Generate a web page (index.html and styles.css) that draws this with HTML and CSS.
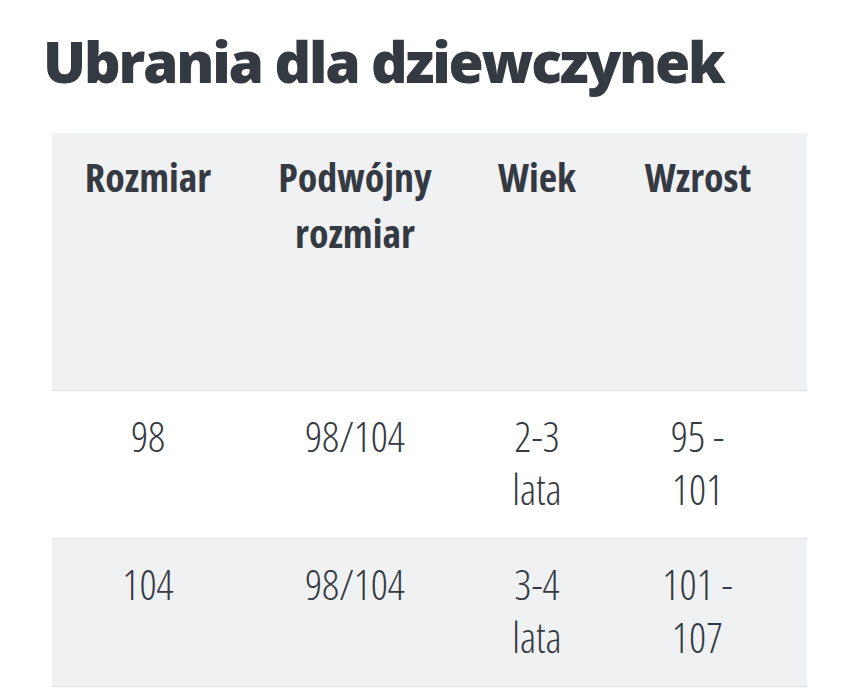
FILE: index.html
```html
<!DOCTYPE html>
<html lang="pl">
<head>
<meta charset="utf-8">
<title>Ubrania dla dziewczynek</title>
<link rel="stylesheet" href="styles.css">
</head>
<body>
<main class="page">
  <h1 class="title">Ubrania dla dziewczynek</h1>
  <table class="sizes">
    <colgroup>
      <col class="c1"><col class="c2"><col class="c3"><col class="c4">
    </colgroup>
    <thead>
      <tr>
        <th class="cell-1">Rozmiar</th>
        <th class="cell-2">Podwójny rozmiar</th>
        <th class="cell-3">Wiek</th>
        <th class="cell-4">Wzrost</th>
      </tr>
    </thead>
    <tbody>
      <tr>
        <td class="cell-1">98</td>
        <td class="cell-2">98/104</td>
        <td class="cell-3">2-3 lata</td>
        <td class="cell-4">95 - 101</td>
      </tr>
      <tr class="alt">
        <td class="cell-1">104</td>
        <td class="cell-2">98/104</td>
        <td class="cell-3">3-4 lata</td>
        <td class="cell-4">101 - 107</td>
      </tr>
    </tbody>
  </table>
</main>
</body>
</html>
```
FILE: styles.css
```css
html, body {
  margin: 0;
  padding: 0;
  background: #ffffff;
}
body {
  font-family: "Open Sans", "Liberation Sans", sans-serif;
  font-stretch: 75%;
  color: #353a42;
}
.page {
  padding: 26px 35px 0 43px;
}
.title {
  margin: 0 0 37px 0;
  font-size: 57px;
  line-height: 70px;
  font-weight: 800;
  font-stretch: 90%;
  letter-spacing: -2.2px;
  color: #353a42;
}
.sizes {
  margin-left: 9px;
  width: 755px;
  table-layout: fixed;
  border-collapse: collapse;
}
.c1 { width: 192px; }
.c2 { width: 222px; }
.c3 { width: 142px; }
.c4 { width: 199px; }
.sizes th,
.sizes td {
  text-align: center;
  vertical-align: top;
}
.sizes th {
  font-size: 40px;
  line-height: 56px;
  font-weight: 700;
  padding: 16px 20px 20px 20px;
  height: 221px;
}
.sizes td {
  font-size: 42px;
  line-height: 53px;
  font-weight: 360;
  padding: 18px 20px 23px 20px;
}
.sizes th.cell-3 {
  padding-left: 10px;
  padding-right: 10px;
}
.sizes th.cell-4 {
  padding-left: 20px;
  padding-right: 39px;
}
.sizes td.cell-3 {
  padding-left: 31px;
  padding-right: 31px;
}
.sizes td.cell-4 {
  padding-left: 44px;
  padding-right: 64px;
}
.sizes thead tr {
  background: #eff1f3;
  border-bottom: 1px solid #dde1e5;
}
.sizes tbody tr {
  background: #ffffff;
  border-bottom: 1px solid #dde1e5;
}
.sizes tbody tr.alt {
  background: #eff1f3;
}
```
